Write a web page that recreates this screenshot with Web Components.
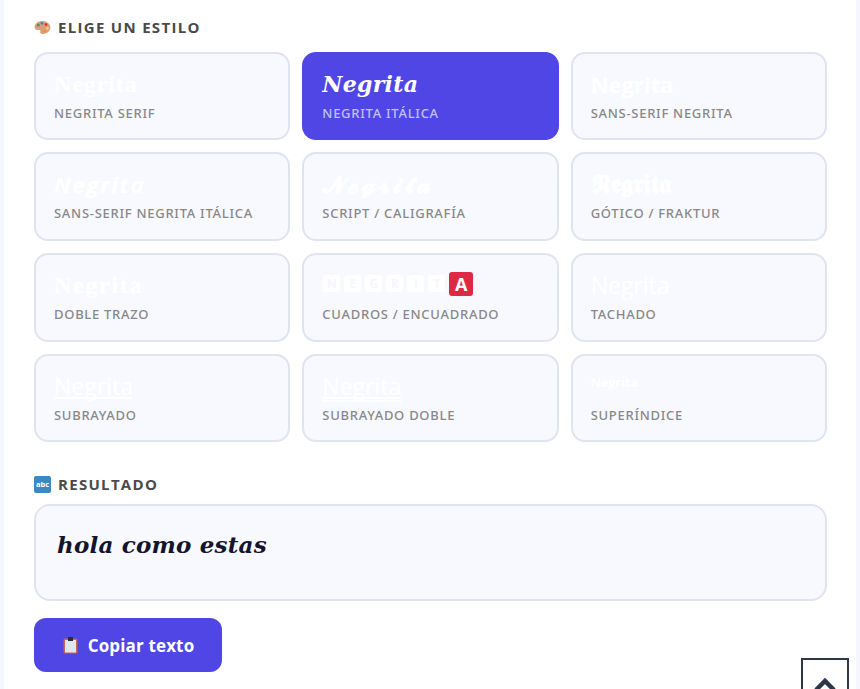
<!DOCTYPE html>
<html lang="es">
  <head>
    <meta charset="UTF-8" />
    <title>Estilos de texto</title>
    <style>
      html, body { margin: 0; height: 100%; overflow: hidden; background: #f4f7ff; }
      body { font-family: "Open Sans", "Noto Sans", sans-serif; }
    </style>
  </head>
  <body>
    <template id="app-panel">
      <style>
        :host { display: flex; flex-direction: column; margin: 0 4px; height: 689px; box-sizing: border-box; padding: 16px 29px 0 30px; background: #fff; overflow: hidden; }
      </style>
      <slot></slot>
    </template>

    <template id="section-title">
      <style>
        :host { display: flex; align-items: center; gap: 7px; height: 22px; font-size: 15px; font-weight: 700; letter-spacing: 1.3px; color: #4a4a4a; text-transform: uppercase; }
        ::slotted(svg) { display: block; width: 17px; height: 17px; flex: none; text-transform: none; }
      </style>
      <slot name="icon"></slot>
      <slot></slot>
    </template>

    <template id="style-grid">
      <style>
        :host { display: grid; grid-template-columns: repeat(3, 1fr); grid-template-rows: 88px 89px 89px 88px; gap: 12px; margin-top: 14px; }
      </style>
      <slot></slot>
    </template>

    <template id="style-card">
      <style>
        :host { display: flex; flex-direction: column; box-sizing: border-box; padding: 14px 18px 0; background: #f8f9ff; border: 2px solid #e0e3f0; border-radius: 14px; color: #fff; min-width: 0; }
        :host([active]) { background: #4f46e5; border-color: #4f46e5; }
        .sample { height: 33px; line-height: 33px; font-size: 24px; font-weight: 700; white-space: nowrap; font-family: "Liberation Serif", serif; letter-spacing: 0.9px; }
        :host([active]) .sample { font-family: "DejaVu Serif", serif; font-size: 22px; font-style: italic; letter-spacing: 0.3px; }
        :host([kind="double"]) .sample { letter-spacing: 1.7px; }
        :host([kind="sans"]) .sample { font-family: "Open Sans", sans-serif; font-size: 22px; letter-spacing: 0; }
        :host([kind="sans-italic"]) .sample { font-family: "Open Sans", sans-serif; font-size: 22px; font-style: italic; letter-spacing: 1.8px; }
        :host([kind="script"]) .sample { font-family: "DejaVu Serif", serif; font-size: 24px; letter-spacing: 3px; }
        :host([kind="gothic"]) .sample { font-family: "DejaVu Serif", serif; font-size: 26px; letter-spacing: 0; }
        :host([kind="plain"]) .sample { font-family: "Open Sans", sans-serif; font-size: 23px; font-weight: 400; letter-spacing: 0; text-decoration-skip-ink: none; }
        :host([kind="super"]) .sample { font-family: "Open Sans", sans-serif; font-size: 12.5px; line-height: 26px; font-weight: 700; letter-spacing: 0; }
        .name { margin-top: 3px; font-family: "Noto Sans", sans-serif; font-size: 13px; line-height: 18px; font-weight: 500; letter-spacing: 0.72px; color: #888; text-transform: uppercase; white-space: nowrap; }
        :host([active]) .name { color: #c3c0f6; }
      </style>
      <div class="sample"><slot name="sample"></slot></div>
      <div class="name"><slot></slot></div>
    </template>

    <template id="boxed-letters">
      <style>
        :host { display: flex; align-items: center; gap: 4px; height: 33px; margin: -2px 0 0 1px; }
        ::slotted(b) { display: block; width: 17px; height: 17px; border-radius: 3px; background: #fff; color: #f6f6fb; font: 700 12px/17px "Open Sans", sans-serif; letter-spacing: 0; text-align: center; }
        ::slotted(i) { display: block; width: 24px; height: 24px; border-radius: 3px; background: #dc2a45; color: #fff; font: 700 18px/24px "Open Sans", sans-serif; letter-spacing: 0; text-align: center; }
      </style>
      <slot></slot>
    </template>

    <template id="result-box">
      <style>
        :host { display: block; box-sizing: border-box; height: 97px; margin-top: 9px; padding: 21px 21px 0; background: #f8f9ff; border: 2px solid #e0e3f0; border-radius: 16px; color: #14142b; font: italic 700 23px/36px "DejaVu Serif", serif; letter-spacing: 0.2px; }
      </style>
      <slot></slot>
    </template>

    <template id="copy-button">
      <style>
        :host { display: inline-flex; align-self: flex-start; align-items: center; justify-content: center; gap: 9px; width: 188px; height: 54px; margin-top: 17px; border-radius: 12px; background: #4f46e5; color: #fff; font-size: 17px; font-weight: 700; letter-spacing: 0.15px; }
        ::slotted(svg) { display: block; width: 17px; height: 18px; }
      </style>
      <slot name="icon"></slot>
      <slot></slot>
    </template>

    <template id="scroll-top">
      <style>
        :host { position: fixed; left: 801px; top: 658px; width: 48px; height: 48px; box-sizing: border-box; border: 2px solid #2d3748; background: #fff; display: flex; justify-content: center; }
        svg { display: block; width: 24px; height: 16px; margin-top: 17px; }
      </style>
      <svg viewBox="0 0 24 16"><path d="M3 13 12 4l9 9" fill="none" stroke="#2d3748" stroke-width="4.5"/></svg>
    </template>

    <app-panel>
      <section-title>
        <svg slot="icon" viewBox="0 0 17 17">
          <path d="M8.5 2C4 2 .6 4.700 .6 8.300c0 2.500 2 3 3.700 2.500 1.500-.4 2.500.3 2 1.800-.4 1.400.5 2.600 2.400 2.400 4.500-.3 7.700-3 7.700-6.500S13 2 8.500 2z" fill="#d99e82"/>
          <circle cx="4.300" cy="6.200" r="1.400" fill="#5c913b"/><circle cx="8" cy="4.300" r="1.400" fill="#3b88c3"/><circle cx="12" cy="5.600" r="1.400" fill="#dd2e44"/><circle cx="13.400" cy="9.500" r="1.400" fill="#ffcc4d"/><circle cx="10.800" cy="12.500" r="1.300" fill="#f4900c"/>
        </svg>
        Elige un estilo
      </section-title>
      <style-grid>
        <style-card><span slot="sample">Negrita</span>Negrita serif</style-card>
        <style-card active><span slot="sample">Negrita</span>Negrita itálica</style-card>
        <style-card kind="sans"><span slot="sample">Negrita</span>Sans-serif negrita</style-card>
        <style-card kind="sans-italic"><span slot="sample">Negrita</span>Sans-serif negrita itálica</style-card>
        <style-card kind="script"><span slot="sample">𝓝𝓮𝓰𝓻𝓲𝓽𝓪</span>Script / caligrafía</style-card>
        <style-card kind="gothic"><span slot="sample">𝕹𝖊𝖌𝖗𝖎𝖙𝖆</span>Gótico / Fraktur</style-card>
        <style-card kind="double"><span slot="sample">Negrita</span>Doble trazo</style-card>
        <style-card>
          <boxed-letters slot="sample"><b>N</b><b>E</b><b>G</b><b>R</b><b>I</b><b>T</b><i>A</i></boxed-letters>
          Cuadros / encuadrado
        </style-card>
        <style-card kind="plain"><span slot="sample">Negrita</span>Tachado</style-card>
        <style-card kind="plain"><span slot="sample" style="text-decoration: underline">Negrita</span>Subrayado</style-card>
        <style-card kind="plain"><span slot="sample" style="text-decoration: underline double">Negrita</span>Subrayado doble</style-card>
        <style-card kind="super"><span slot="sample">Negrita</span>Superíndice</style-card>
      </style-grid>
      <section-title style="margin-top: 31px">
        <svg slot="icon" viewBox="0 0 17 17">
          <rect width="17" height="17" rx="2" fill="#3b88c3"/>
          <text x="8.500" y="11" font-size="7.500" font-weight="700" font-family="Open Sans" fill="#fff" text-anchor="middle" letter-spacing="0">abc</text>
        </svg>
        Resultado
      </section-title>
      <result-box>hola como estas</result-box>
      <copy-button>
        <svg slot="icon" viewBox="0 0 17 18">
          <rect x="1.500" y="2.500" width="14" height="15" rx="1.500" fill="#c1694f"/>
          <rect x="3" y="4" width="11" height="12.500" fill="#e1e8ed"/>
          <path d="M6 1h5v4H6z" fill="#292f33"/>
        </svg>
        Copiar texto
      </copy-button>
    </app-panel>
    <scroll-top></scroll-top>

    <script>
      // every tag has a template of the same id, so register them in one go
      for (const template of document.querySelectorAll('template[id]')) {
        customElements.define(
          template.id,
          class extends HTMLElement {
            constructor() {
              super();
              this.attachShadow({ mode: 'open' });
              this.shadowRoot.appendChild(template.content.cloneNode(true));
            }
          }
        );
      }
    </script>
  </body>
</html>
